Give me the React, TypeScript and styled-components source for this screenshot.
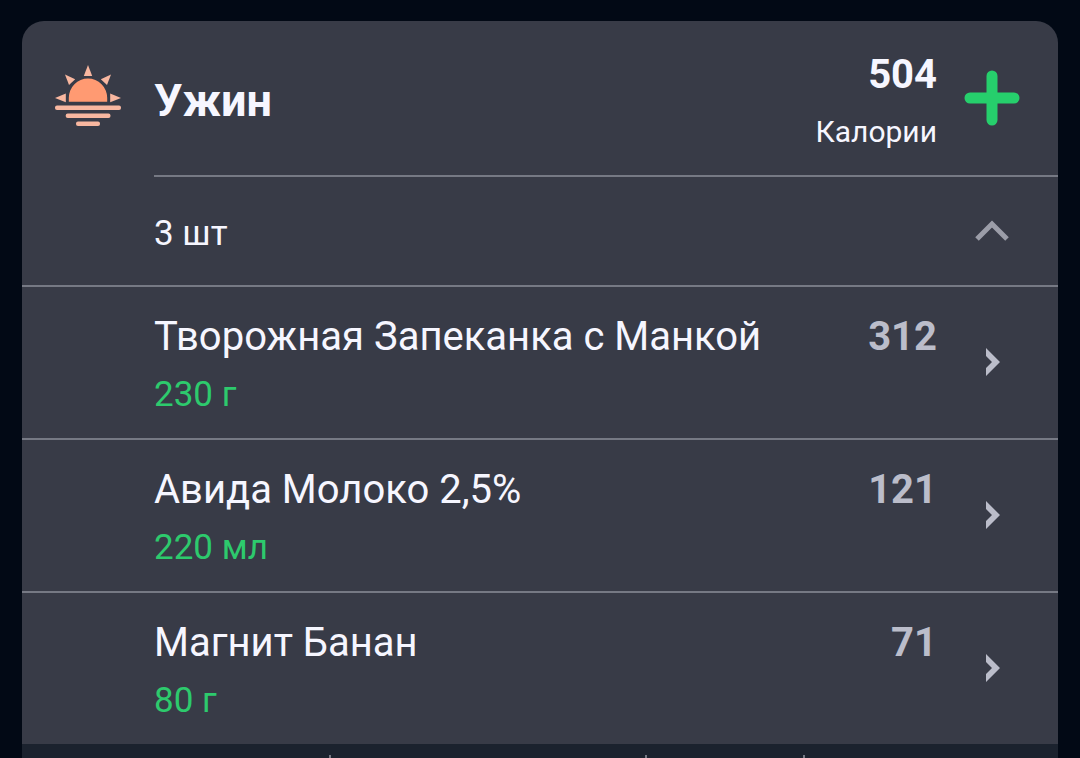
import React, { useState } from "react";
import styled, { createGlobalStyle } from "styled-components";

const GlobalStyle = createGlobalStyle`
  *, *::before, *::after { box-sizing: border-box; }
  body {
    margin: 0;
    background: #020915;
    color: #f6f6ff;
    font-family: Roboto, "Noto Sans", sans-serif;
  }
`;

const Page = styled.main`
  padding: 21px 22px 0;
`;

const Card = styled.section`
  background: #383b47;
  border-radius: 22px 22px 0 0;
  overflow: hidden;
`;

const Header = styled.header`
  display: grid;
  grid-template-columns: 132px minmax(0, 1fr) auto 110px;
  align-items: center;
  padding: 30px 11px 27px 0;
`;

const IconCell = styled.div`
  display: flex;
  justify-content: center;
  padding-bottom: 8px;
`;

const Title = styled.h2`
  margin: 0;
  padding-top: 2px;
  font-size: 45px;
  line-height: 52px;
  font-weight: 700;
`;

const Total = styled.div`
  display: flex;
  flex-direction: column;
  align-items: flex-end;
  gap: 17px;
`;

const Value = styled.strong<{ $muted?: boolean }>`
  font-size: 40px;
  line-height: 48px;
  font-weight: 700;
  color: ${(p) => (p.$muted ? "#bbbdca" : "#f6f6ff")};
`;

const Caption = styled.span`
  font-size: 30px;
  line-height: 32px;
`;

const IconButton = styled.button`
  display: flex;
  justify-self: center;
  padding: 0 0 3px;
  border: 0;
  background: none;
  cursor: pointer;
`;

const Rule = styled.hr`
  height: 2px;
  margin: 0 0 0 132px;
  border: 0;
  background: #767984;
`;

const Summary = styled.button`
  display: grid;
  grid-template-columns: minmax(0, 1fr) 110px;
  align-items: center;
  width: 100%;
  padding: 31px 11px 31px 132px;
  border: 0;
  background: none;
  color: inherit;
  font: inherit;
  font-size: 35px;
  line-height: 40px;
  text-align: left;
  cursor: pointer;

  svg { justify-self: center; }
`;

const Count = styled.span`
  padding-top: 6px;
`;

const List = styled.ul`
  margin: 0;
  padding: 0;
  list-style: none;
`;

const Item = styled.li`
  border-top: 2px solid #767984;
`;

const ItemLink = styled.a`
  display: grid;
  grid-template-columns: minmax(0, 1fr) auto 110px;
  padding: 26px 11px 23px 132px;
  color: inherit;
  text-decoration: none;

  svg {
    align-self: center;
    justify-self: center;
    margin-bottom: 4px;
  }
`;

const Food = styled.div`
  display: flex;
  flex-direction: column;
  gap: 14px;
`;

const Name = styled.span`
  font-size: 40px;
  line-height: 48px;
`;

const Amount = styled.span`
  font-size: 35px;
  line-height: 40px;
  color: #2dca6d;
`;

const Footer = styled.footer`
  display: grid;
  grid-template-columns: 309fr 316fr 158fr 253fr;
  padding-top: 11px;
  background: #1b222e;
`;

const FooterCell = styled.div`
  height: 3px;

  &:not(:last-child) { border-right: 2px solid #767984; }
`;

const SunsetIcon = () => (
  <svg width="68" height="64" viewBox="0 0 68 64" aria-hidden="true">
    <path d="M14.8 37.8v-4a19.2 19.2 0 0 1 38.4 0v4z" fill="#ff9a72" />
    <g fill="#f8b7a0">
      <path d="M34 1l4.2 11h-8.4z" />
      <path d="M11 10.500l10.200 4.800-6.200 5.600z" />
      <path d="M57 10.500l-10.200 4.800 6.200 5.600z" />
      <path d="M1 34l10.800-4.400v8.600z" />
      <path d="M67 34l-10.800-4.400v8.600z" />
      <rect x="1" y="41.600" width="66" height="4.500" rx="2" />
      <rect x="11.700" y="49.600" width="44.800" height="4.500" rx="2" />
      <rect x="22" y="57.500" width="24" height="4.500" rx="2" />
    </g>
  </svg>
);

const PlusIcon = () => (
  <svg width="56" height="56" viewBox="0 0 56 56" aria-hidden="true">
    <path d="M28 6v44M6 28h44" stroke="#26cf6c" strokeWidth="11" strokeLinecap="round" />
  </svg>
);

const ChevronUp = () => (
  <svg width="34" height="22" viewBox="0 0 34 22" aria-hidden="true">
    <path d="M2 19L17 4l15 15" fill="none" stroke="#9b9da8" strokeWidth="5" />
  </svg>
);

const ChevronRight = () => (
  <svg width="16" height="28" viewBox="0 0 16 28" aria-hidden="true">
    <path d="M2 0l14 14L2 28v-8l6-6-6-6z" fill="#bbbdca" />
  </svg>
);

const foods = [
  { name: "Творожная Запеканка с Манкой", amount: "230 г", calories: 312 },
  { name: "Авида Молоко 2,5%", amount: "220 мл", calories: 121 },
  { name: "Магнит Банан", amount: "80 г", calories: 71 },
];

export default function App() {
  const [open, setOpen] = useState(true);
  return (
    <>
      <GlobalStyle />
      <Page>
        <Card>
          <Header>
            <IconCell><SunsetIcon /></IconCell>
            <Title>Ужин</Title>
            <Total>
              <Value>504</Value>
              <Caption>Калории</Caption>
            </Total>
            <IconButton type="button" aria-label="Добавить"><PlusIcon /></IconButton>
          </Header>
          <Rule />
          <Summary type="button" aria-expanded={open} onClick={() => setOpen(!open)}>
            <Count>3 шт</Count>
            <ChevronUp />
          </Summary>
          {open && (
            <List>
              {foods.map((food) => (
                <Item key={food.name}>
                  <ItemLink href="#">
                    <Food>
                      <Name>{food.name}</Name>
                      <Amount>{food.amount}</Amount>
                    </Food>
                    <Value $muted>{food.calories}</Value>
                    <ChevronRight />
                  </ItemLink>
                </Item>
              ))}
            </List>
          )}
          <Footer>
            <FooterCell />
            <FooterCell />
            <FooterCell />
            <FooterCell />
          </Footer>
        </Card>
      </Page>
    </>
  );
}
